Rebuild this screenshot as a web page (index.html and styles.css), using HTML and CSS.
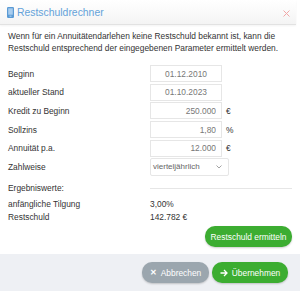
FILE: index.html
```html
<!DOCTYPE html>
<html lang="de">
<head>
  <meta charset="UTF-8">
  <meta name="viewport" content="width=device-width, initial-scale=1">
  <title>Restschuldrechner</title>
  <link rel="stylesheet" href="styles.css">
</head>
<body>
  <div class="modal">
    <div class="modal-header">
      <div class="title">
        <svg class="title-icon" width="7" height="11" viewBox="0 0 7 11">
          <rect x="0" y="0" width="7" height="11" rx="1.2" fill="#5b9bd5"/>
          <rect x="1.2" y="1.3" width="4.6" height="6.4" fill="#a9cdee"/>
          <rect x="2.5" y="8.6" width="2" height="1.2" fill="#a9cdee"/>
        </svg>
        <span>Restschuldrechner</span>
      </div>
      <svg class="close" width="7" height="7" viewBox="0 0 7 7"><path d="M0.5 0.5 L6.5 6.5 M6.5 0.5 L0.5 6.5" stroke="#f2a6a6" stroke-width="1"/></svg>
    </div>

    <div class="modal-body">
      <p class="intro">Wenn für ein Annuitätendarlehen keine Restschuld bekannt ist, kann die Restschuld entsprechend der eingegebenen Parameter ermittelt werden.</p>

      <div class="form">
        <label>Beginn</label>
        <div class="field"><input class="center" type="text" value="01.12.2010"></div>

        <label>aktueller Stand</label>
        <div class="field"><input class="center" type="text" value="01.10.2023"></div>

        <label>Kredit zu Beginn</label>
        <div class="field"><input type="text" value="250.000"><span class="unit">€</span></div>

        <label>Sollzins</label>
        <div class="field"><input type="text" value="1,80"><span class="unit">%</span></div>

        <label>Annuität p.a.</label>
        <div class="field"><input type="text" value="12.000"><span class="unit">€</span></div>

        <label>Zahlweise</label>
        <div class="field">
          <div class="select">
            <span>vierteljährlich</span>
            <svg width="6" height="4" viewBox="0 0 6 4"><path d="M0.5 0.5 L3 3 L5.5 0.5" fill="none" stroke="#999" stroke-width="0.9"/></svg>
          </div>
        </div>
      </div>

      <div class="results">
        <div class="result-head">
          <span class="label">Ergebniswerte:</span>
          <span class="rule"></span>
        </div>
        <div class="result-row"><span class="label">anfängliche Tilgung</span><span>3,00%</span></div>
        <div class="result-row"><span class="label">Restschuld</span><span>142.782 €</span></div>
      </div>

      <div class="calc-row">
        <button class="btn btn-green">Restschuld ermitteln</button>
      </div>
    </div>

    <div class="modal-footer">
      <button class="btn btn-gray"><span class="btn-icon">&#x2715;</span>Abbrechen</button>
      <button class="btn btn-green">
        <svg class="btn-icon" width="8" height="8" viewBox="0 0 8 8"><path d="M0.5 4 H7 M4 1 L7 4 L4 7" fill="none" stroke="#fff" stroke-width="1.3"/></svg>Übernehmen
      </button>
    </div>
  </div>
</body>
</html>
```

FILE: styles.css
```css
body {
  margin: 0;
  font-family: "Liberation Sans", Arial, sans-serif;
  font-size: 8.4px;
  color: #333;
  background: #fff;
}
.modal {
  width: 300px;
  height: 291px;
  display: flex;
  flex-direction: column;
  background: #fff;
}
.modal-header {
  height: 24px;
  display: flex;
  align-items: center;
  justify-content: space-between;
  padding: 0 6px 0 7px;
  background: linear-gradient(#fff, #f4f4f4);
  border-bottom: 1px solid #e2e2e2;
  box-shadow: 0 1px 2px rgba(0,0,0,0.05);
  margin-right: 4px;
}
.title {
  display: flex;
  align-items: center;
  gap: 3px;
  color: #64a2d9;
  font-size: 10.4px;
}
.close {
  margin-top: 3px;
}
.modal-body {
  flex: 1;
  padding: 0 8px;
}
.intro {
  margin: 5px 0 11px;
  line-height: 12px;
}
.form {
  display: grid;
  grid-template-columns: 142px 1fr;
  row-gap: 1.7px;
  align-items: center;
}
.field {
  display: flex;
  align-items: center;
  height: 17px;
}
.field input {
  width: 72px;
  height: 17px;
  box-sizing: border-box;
  border: 1px solid #e6e6e6;
  padding: 0 5px;
  font-family: inherit;
  font-size: 8.4px;
  color: #777;
  text-align: right;
}
.field input.center {
  text-align: center;
}
.unit {
  margin-left: 4px;
  color: #333;
}
.select {
  width: 79px;
  height: 18px;
  box-sizing: border-box;
  border: 1px solid #e6e6e6;
  border-radius: 2px;
  display: flex;
  align-items: center;
  justify-content: space-between;
  padding: 0 6px 0 2px;
  color: #666;
  font-size: 8px;
}
.results {
  margin-top: 8px;
}
.result-head {
  display: flex;
  align-items: center;
  margin-bottom: 5px;
}
.result-head .rule {
  flex: 1;
  border-top: 1px solid #e6e6e6;
}
.result-row {
  display: flex;
  line-height: 13px;
}
.label {
  width: 142px;
}
.calc-row {
  display: flex;
  justify-content: flex-end;
  margin-top: 2px;
}
.btn {
  height: 21px;
  border: none;
  border-radius: 10px;
  padding: 0 7px;
  font-family: inherit;
  font-size: 8.4px;
  color: #fff;
  display: inline-flex;
  align-items: center;
  justify-content: center;
  gap: 4px;
  white-space: nowrap;
  box-shadow: 0 1px 2px rgba(0,0,0,0.2);
}
.btn-green {
  background: #3cad31;
}
.btn-gray {
  background: #9ba6ae;
}
.calc-row .btn {
  width: 87px;
}
.modal-footer {
  height: 37px;
  background: #eef0f4;
  display: flex;
  justify-content: flex-end;
  align-items: center;
  gap: 3px;
  padding: 0 12px;
}
.modal-footer .btn-gray {
  width: 67px;
}
.modal-footer .btn-green {
  width: 76px;
}
.btn-icon {
  font-size: 8px;
  font-weight: bold;
}
```
